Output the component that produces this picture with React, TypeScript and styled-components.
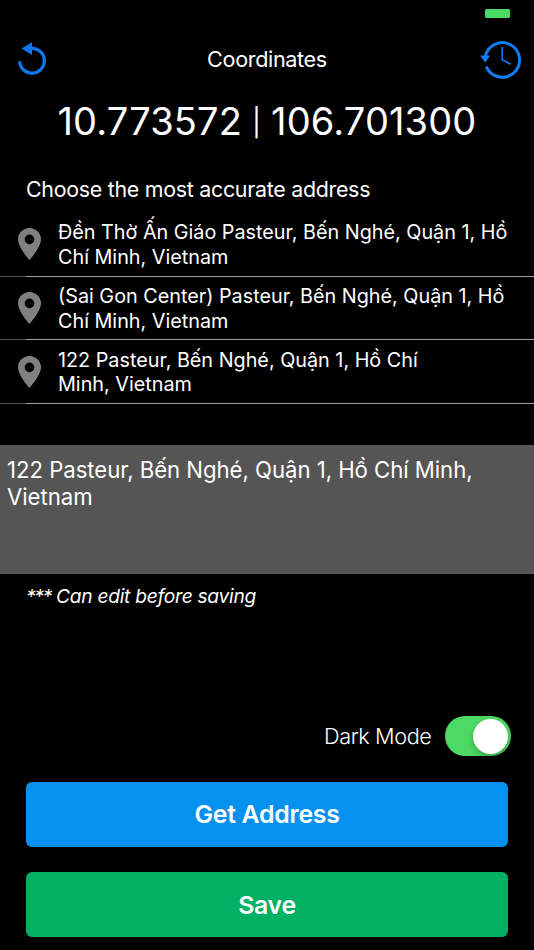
import React, { useState } from "react";
import styled, { createGlobalStyle } from "styled-components";

const GlobalStyle = createGlobalStyle`
  *, *::before, *::after { box-sizing: border-box; }
  body { margin: 0; background: #000; }
`;

const Screen = styled.main`
  width: 534px;
  height: 950px;
  overflow: hidden;
  display: flex;
  flex-direction: column;
  background: #000;
  color: #fff;
  font-family: Inter, "Noto Sans", sans-serif;
`;

const StatusBar = styled.div`
  height: 27px;
  flex: none;
  display: flex;
  justify-content: flex-end;
  padding: 8.5px 24px 0 0;
`;

const Battery = styled.span`
  width: 25px;
  height: 9.5px;
  border-radius: 1.5px;
  background: #4cd964;
`;

const Header = styled.header`
  height: 64px;
  flex: none;
  display: grid;
  grid-template-columns: 60px 1fr 60px;
  align-items: center;
`;

const Title = styled.h1`
  margin: 0;
  font-size: 21.6px;
  line-height: 28px;
  font-weight: 400;
  letter-spacing: -0.35px;
  text-align: center;
`;

const IconButton = styled.button<{ $side: "left" | "right" }>`
  display: flex;
  justify-content: ${(p) => (p.$side === "left" ? "flex-start" : "flex-end")};
  padding: ${(p) => (p.$side === "left" ? "0 0 0 16px" : "0 12px 0 0")};
  border: 0;
  background: none;
`;

const Coordinates = styled.div`
  height: 60px;
  flex: none;
  display: flex;
  justify-content: center;
  align-items: center;
  gap: 12px;
  font-size: 38px;
  line-height: 60px;
  font-weight: 400;
  letter-spacing: 0.15px;
  white-space: nowrap;
`;

const Divider = styled.span`
  font-size: 27px;
  line-height: 34px;
  padding-top: 4px;
  width: 5px;
  display: flex;
  justify-content: center;
`;

const Prompt = styled.h2`
  flex: none;
  margin: 24px 0 0 26px;
  font-size: 21.4px;
  line-height: 28px;
  font-weight: 400;
  letter-spacing: -0.28px;
`;

const AddressList = styled.ul`
  flex: none;
  list-style: none;
  margin: 10px 0 0;
  padding: 0;
`;

const AddressRow = styled.li`
  height: 63.7px;
  display: grid;
  grid-template-columns: 58px 1fr;
  grid-template-rows: 1fr 1px;
  align-items: center;
`;

const PinCell = styled.span`
  padding-left: 18px;
  display: flex;
`;

const AddressText = styled.span`
  padding-top: 1px;
  font-size: 19.8px;
  line-height: 24.5px;
  white-space: pre-line;
`;

const Separator = styled.span`
  grid-column: 1 / -1;
  height: 1px;
  background: linear-gradient(to right, #555 26px, #a0a0a0 26px);
`;

const Editor = styled.div`
  flex: none;
  height: 129px;
  margin-top: 41px;
  padding: 11px 7px;
  background: #555;
  font-size: 22.2px;
  line-height: 27.3px;
  letter-spacing: -0.05px;
  white-space: pre-line;
`;

const Note = styled.p`
  flex: none;
  margin: 9px 0 0 26px;
  font-size: 19.2px;
  line-height: 26px;
  font-style: italic;
  letter-spacing: -0.28px;
`;

const Asterisks = styled.span`
  letter-spacing: -1.3px;
`;

const ModeRow = styled.div`
  flex: none;
  height: 40px;
  margin-top: 107px;
  padding-right: 23.5px;
  display: flex;
  justify-content: flex-end;
  align-items: center;
  gap: 13.5px;
`;

const ModeLabel = styled.span`
  font-size: 21.7px;
  font-weight: 350;
  letter-spacing: -0.4px;
`;

const Switch = styled.button<{ $on: boolean }>`
  width: 65.5px;
  height: 40px;
  padding: 0 2.5px;
  border: 0;
  border-radius: 20px;
  display: flex;
  align-items: center;
  justify-content: ${(p) => (p.$on ? "flex-end" : "flex-start")};
  background: ${(p) => (p.$on ? "#4cd964" : "#555")};
`;

const Knob = styled.span`
  width: 35px;
  height: 35px;
  border-radius: 50%;
  background: #fff;
  box-shadow: 0 3px 6px rgba(0, 0, 0, 0.25);
`;

const Actions = styled.div`
  flex: none;
  margin: 26px 26px 0;
  display: flex;
  flex-direction: column;
  gap: 25.5px;
`;

const ActionButton = styled.button<{ $color: string }>`
  height: 64.7px;
  padding: 0;
  border: 0;
  border-radius: 6px;
  background: ${(p) => p.$color};
  color: #fff;
  font-family: inherit;
  font-size: 24.8px;
  font-weight: 600;
  letter-spacing: -0.28px;
`;

const RefreshIcon = () => (
  <svg width="32" height="36" viewBox="0 0 32 36" fill="none">
    <path d="M3.6 20.2 A12.4 12.4 0 1 0 16 7.3 H14.5" stroke="#0f76ee" strokeWidth="3.2" />
    <path d="M5.5 7.6 L16 1.2 V14 Z" fill="#0f76ee" />
  </svg>
);

const HistoryIcon = () => (
  <svg width="42" height="40" viewBox="0 0 42 40" fill="none">
    <path d="M5.2 18 A17.3 17.3 0 1 1 6.3 27.6" stroke="#0f7df2" strokeWidth="3" />
    <path d="M0 16.5 H10.2 L5.2 23.6 Z" fill="#0f7df2" />
    <path d="M22.2 8 V20.7 L30.7 25.3" stroke="#0f7df2" strokeWidth="1.6" />
  </svg>
);

const PinIcon = () => (
  <svg width="23" height="32" viewBox="0 0 23 32">
    <path
      fill="#808080"
      fillRule="evenodd"
      d="M11.5 0 C5.1 0 0 5 0 11.3 C0 19.6 11.5 32 11.5 32 S23 19.6 23 11.3 C23 5 17.9 0 11.5 0 Z M11.5 6.6 a4.8 4.8 0 1 1 0 9.6 a4.8 4.8 0 1 1 0 -9.6 Z"
    />
  </svg>
);

const addresses = [
  "Đền Thờ Ấn Giáo Pasteur, Bến Nghé, Quận 1, Hồ\nChí Minh, Vietnam",
  "(Sai Gon Center) Pasteur, Bến Nghé, Quận 1, Hồ\nChí Minh, Vietnam",
  "122 Pasteur, Bến Nghé, Quận 1, Hồ Chí\nMinh, Vietnam",
];

export default function App() {
  const [dark, setDark] = useState(true);
  return (
    <>
      <GlobalStyle />
      <Screen>
        <StatusBar><Battery /></StatusBar>
        <Header>
          <IconButton $side="left"><RefreshIcon /></IconButton>
          <Title>Coordinates</Title>
          <IconButton $side="right"><HistoryIcon /></IconButton>
        </Header>
        <Coordinates>
          <span>10.773572</span>
          <Divider>|</Divider>
          <span>106.701300</span>
        </Coordinates>
        <Prompt>Choose the most accurate address</Prompt>
        <AddressList>
          {addresses.map((address) => (
            <AddressRow key={address}>
              <PinCell><PinIcon /></PinCell>
              <AddressText>{address}</AddressText>
              <Separator />
            </AddressRow>
          ))}
        </AddressList>
        <Editor>{"122 Pasteur, Bến Nghé, Quận 1, Hồ Chí Minh,\nVietnam"}</Editor>
        <Note><Asterisks>***</Asterisks> Can edit before saving</Note>
        <ModeRow>
          <ModeLabel>Dark Mode</ModeLabel>
          <Switch $on={dark} onClick={() => setDark(!dark)}><Knob /></Switch>
        </ModeRow>
        <Actions>
          <ActionButton $color="#0491ef">Get Address</ActionButton>
          <ActionButton $color="#02b063">Save</ActionButton>
        </Actions>
      </Screen>
    </>
  );
}
